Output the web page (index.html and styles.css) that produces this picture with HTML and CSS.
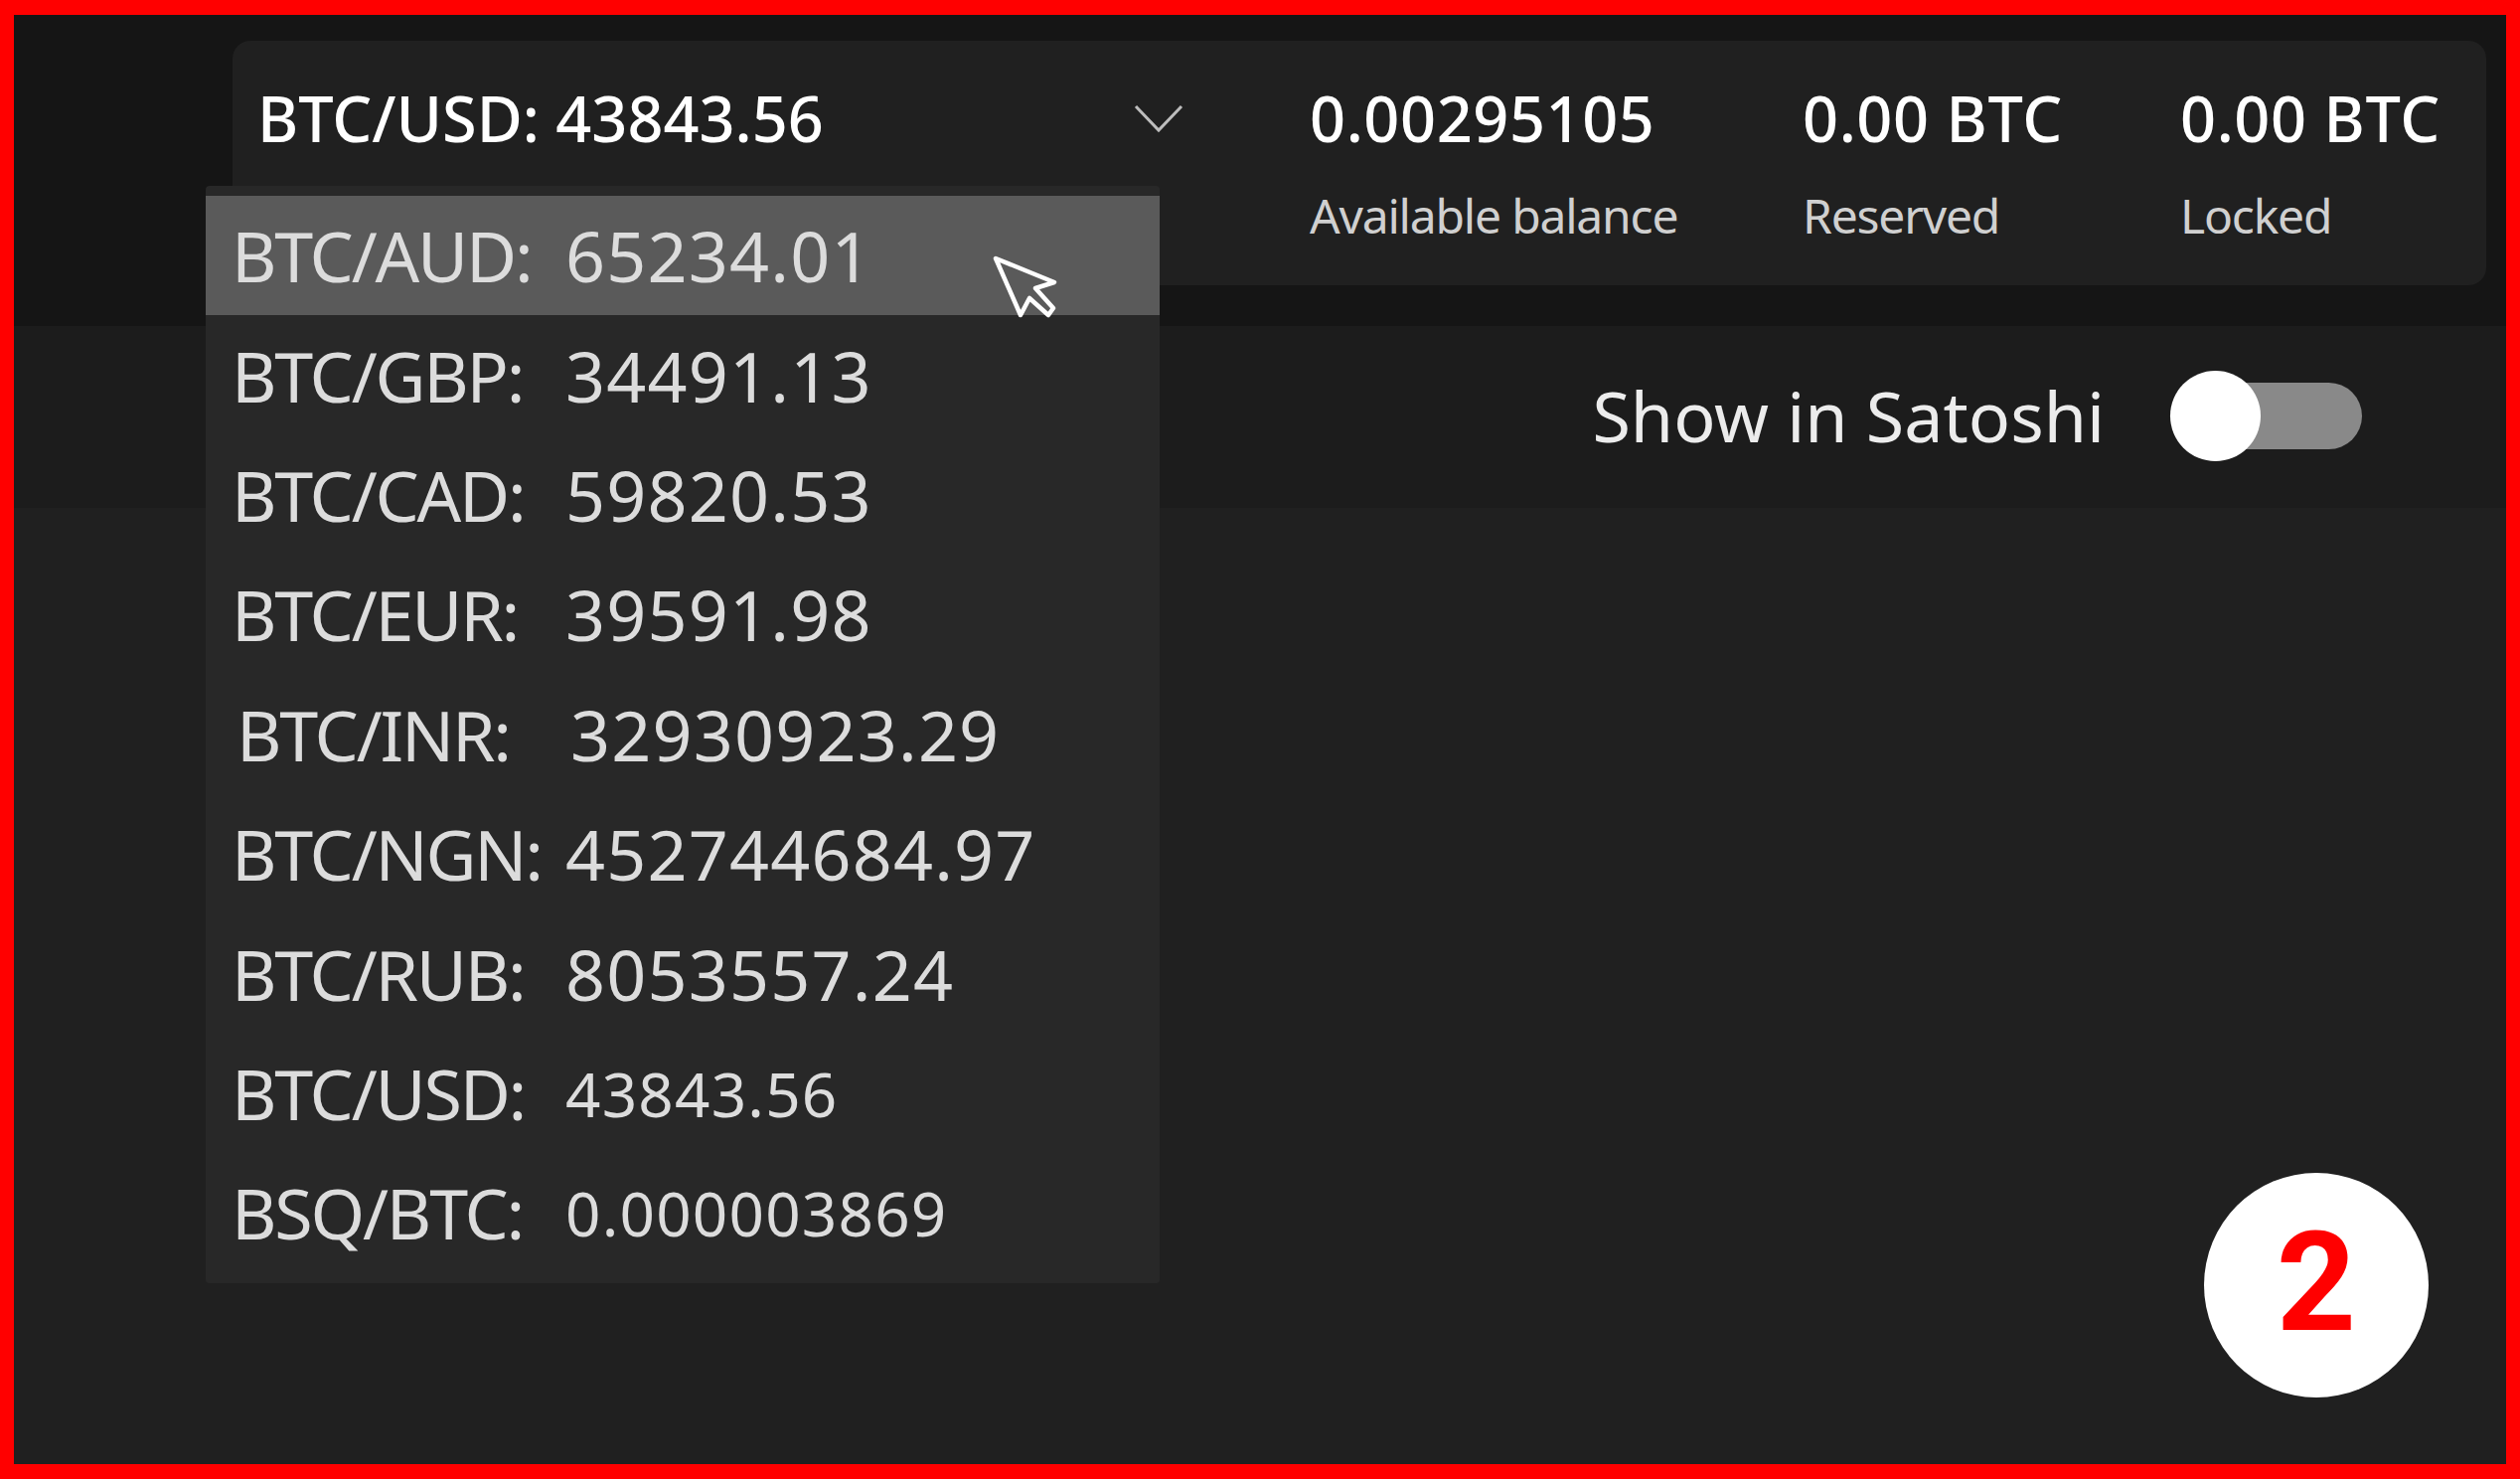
FILE: index.html
```html
<!DOCTYPE html>
<html>
<head>
  <title>Wallet balance</title>
  <link rel="stylesheet" href="styles.css">
</head>
<body>
  <div class="frame">
    <div class="screen">

      <header class="top-band">
        <div class="balance-card">
          <div class="market">
            <span class="market-price">BTC/USD: 43843.56</span>
            <svg class="chevron" width="52" height="30" viewBox="0 0 52 30">
              <polyline points="2,2 25,26 48,2" />
            </svg>
          </div>
          <div class="stat stat-available">
            <div class="stat-value">0.00295105</div>
            <div class="stat-label">Available balance</div>
          </div>
          <div class="stat stat-reserved">
            <div class="stat-value">0.00 BTC</div>
            <div class="stat-label">Reserved</div>
          </div>
          <div class="stat">
            <div class="stat-value">0.00 BTC</div>
            <div class="stat-label">Locked</div>
          </div>
        </div>
      </header>

      <div class="options-band">
        <span class="option-label">Show in Satoshi</span>
        <div class="toggle"><div class="toggle-knob"></div></div>
      </div>

      <div class="content">
        <div class="step-badge">2</div>
      </div>

      <!-- open market selector, drawn over the page -->
      <ul class="market-menu">
        <li class="menu-item active">
          <span class="pair">BTC/AUD:</span><span class="rate">65234.01</span>
          <svg class="pointer" width="75" height="75" viewBox="0 0 75 75">
            <polygon points="7,8 66,32 47,38 65,58 60,65 41,48 32,65" />
          </svg>
        </li>
        <li class="menu-item"><span class="pair">BTC/GBP:</span><span class="rate">34491.13</span></li>
        <li class="menu-item"><span class="pair">BTC/CAD:</span><span class="rate">59820.53</span></li>
        <li class="menu-item"><span class="pair">BTC/EUR:</span><span class="rate">39591.98</span></li>
        <li class="menu-item shifted"><span class="pair">BTC/INR:</span><span class="rate">32930923.29</span></li>
        <li class="menu-item"><span class="pair">BTC/NGN:</span><span class="rate">452744684.97</span></li>
        <li class="menu-item"><span class="pair">BTC/RUB:</span><span class="rate">8053557.24</span></li>
        <li class="menu-item"><span class="pair">BTC/USD:</span><span class="rate small">43843.56</span></li>
        <li class="menu-item"><span class="pair">BSQ/BTC:</span><span class="rate small">0.000003869</span></li>
      </ul>

    </div>
  </div>
</body>
</html>
```

FILE: styles.css
```css
/* page frame */
body {
  margin: 0;
  font-family: "Noto Sans", "Open Sans", sans-serif;
}

.frame {
  width: 2536px;
  height: 1488px;
  box-sizing: border-box;
  border: solid #ff0000;
  border-width: 15px 14px;
}

.screen {
  position: relative;
  height: 100%;
  display: flex;
  flex-direction: column;
  background-color: #202020;
}

/* top band with the balance card */
.top-band {
  height: 313px;
  box-sizing: border-box;
  padding: 26px 20px 0 220px;
  background-color: #151515;
}

.balance-card {
  height: 246px;
  box-sizing: border-box;
  padding-top: 38px;
  display: flex;
  align-items: flex-start;
  border-radius: 18px;
  background-color: #202020;
}

.market {
  width: 1084px;
  height: 80px;
  box-sizing: border-box;
  padding: 0 125px 0 25px;
  display: flex;
  align-items: center;
  justify-content: space-between;
}

.market-price,
.stat-value {
  font-size: 63px;
  line-height: 80px;
  font-weight: 500;
  color: #ffffff;
}

.stat-value {
  letter-spacing: 0.6px;
}

.chevron {
  margin-top: 2px;
}

.chevron polyline {
  fill: none;
  stroke: #bdbdbd;
  stroke-width: 3;
}

.stat-available {
  width: 496px;
}

.stat-reserved {
  width: 380px;
}

.stat-label {
  margin-top: 28px;
  font-size: 48px;
  line-height: 60px;
  letter-spacing: -1.2px;
  color: #d0d0d0;
}

/* satoshi toggle row */
.options-band {
  height: 183px;
  box-sizing: border-box;
  padding: 0 145px 2px 0;
  display: flex;
  align-items: center;
  justify-content: flex-end;
  gap: 66px;
  background-color: #1c1c1c;
}

.option-label {
  font-size: 70px;
  line-height: 91px;
  color: #ececec;
}

.toggle {
  position: relative;
  width: 193px;
  height: 91px;
}

.toggle::before {
  content: "";
  position: absolute;
  left: 20px;
  right: 0;
  top: 12px;
  height: 67px;
  border-radius: 34px;
  background-color: #898989;
}

.toggle-knob {
  position: absolute;
  left: 0;
  top: 0;
  width: 91px;
  height: 91px;
  border-radius: 50%;
  background-color: #ffffff;
}

/* main area */
.content {
  flex: 1;
  display: flex;
  align-items: flex-end;
  justify-content: flex-end;
  padding: 0 78px 67px 0;
}

.step-badge {
  width: 226px;
  height: 226px;
  border-radius: 50%;
  background-color: #ffffff;
  color: #ff0000;
  font-family: Roboto, "Liberation Sans", sans-serif;
  font-weight: 700;
  font-size: 140px;
  line-height: 220px;
  text-align: center;
}

/* dropdown list */
.market-menu {
  position: absolute;
  left: 193px;
  top: 172px;
  width: 960px;
  margin: 0;
  padding: 10px 0;
  list-style: none;
  border-radius: 4px;
  background-color: #282828;
}

.menu-item {
  position: relative;
  height: 120.4px;
  padding-left: 26px;
  display: flex;
  align-items: center;
  font-size: 70px;
  color: #dcdcdc;
}

.menu-item.active {
  background-color: #5a5a5a;
}

.menu-item.shifted {
  padding-left: 31px;
}

.pair {
  width: 336px;
  flex-shrink: 0;
  letter-spacing: -2.2px;
}

.rate {
  letter-spacing: 1.2px;
}

.rate.small {
  font-size: 62px;
}

.pointer {
  position: absolute;
  left: 788px;
  top: 55px;
}

.pointer polygon {
  fill: none;
  stroke: #ffffff;
  stroke-width: 4.5;
  stroke-linejoin: round;
}
```
